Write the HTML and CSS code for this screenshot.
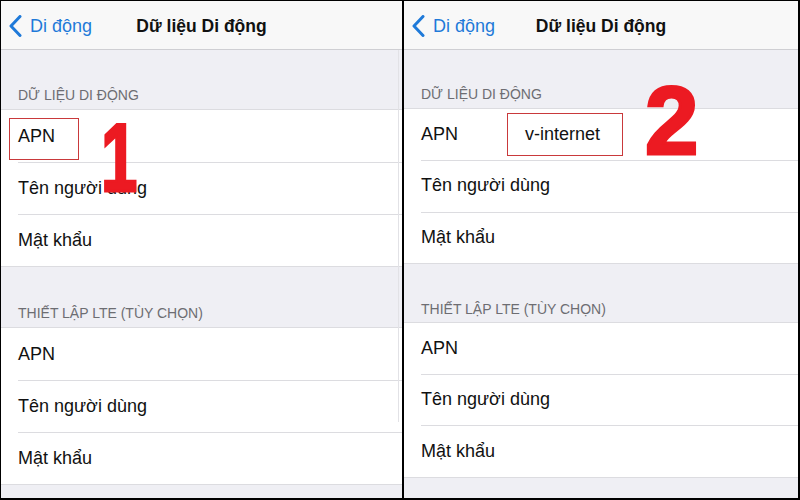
FILE: index.html
```html
<!DOCTYPE html>
<html lang="vi">
<head>
<meta charset="utf-8">
<title>Dữ liệu Di động</title>
<link rel="stylesheet" href="styles.css">
</head>
<body>
<div class="frame">
  <section class="panel panel-a">
    <header class="nav">
      <a class="back">
        <svg class="chev" width="14" height="22" viewBox="0 0 14 22"><polyline points="11,1.5 2,11 11,20.5" fill="none" stroke="#1f7ad9" stroke-width="3" stroke-linecap="round" stroke-linejoin="round"/></svg>
        <span>Di động</span>
      </a>
      <h1 class="title">Dữ liệu Di động</h1>
    </header>
    <div class="sec-head h59">DỮ LIỆU DI ĐỘNG</div>
    <ul class="group">
      <li class="row">APN</li>
      <li class="row">Tên người dùng</li>
      <li class="row">Mật khẩu</li>
    </ul>
    <div class="sec-head h60">THIẾT LẬP LTE (TÙY CHỌN)</div>
    <ul class="group">
      <li class="row">APN</li>
      <li class="row">Tên người dùng</li>
      <li class="row">Mật khẩu</li>
    </ul>
    <div class="mark mark-a"></div>
    <div class="num num-1">1</div>
    <div class="scroll"></div>
  </section>
  <section class="panel panel-b">
    <header class="nav">
      <a class="back">
        <svg class="chev" width="14" height="22" viewBox="0 0 14 22"><polyline points="11,1.5 2,11 11,20.5" fill="none" stroke="#1f7ad9" stroke-width="3" stroke-linecap="round" stroke-linejoin="round"/></svg>
        <span>Di động</span>
      </a>
      <h1 class="title">Dữ liệu Di động</h1>
    </header>
    <div class="sec-head h58">DỮ LIỆU DI ĐỘNG</div>
    <ul class="group">
      <li class="row">APN<span class="value">v-internet</span></li>
      <li class="row">Tên người dùng</li>
      <li class="row">Mật khẩu</li>
    </ul>
    <div class="sec-head h58 pb5">THIẾT LẬP LTE (TÙY CHỌN)</div>
    <ul class="group">
      <li class="row">APN</li>
      <li class="row">Tên người dùng</li>
      <li class="row">Mật khẩu</li>
    </ul>
    <div class="mark mark-b"></div>
    <div class="num num-2">2</div>
  </section>
</div>
</body>
</html>
```

FILE: styles.css
```css
* { box-sizing: border-box; }
html, body {
  margin: 0;
  padding: 0;
  width: 800px;
  height: 500px;
  overflow: hidden;
  background: #000;
  font-family: "Liberation Sans", Arial, sans-serif;
}
.frame {
  display: flex;
  gap: 2px;
  padding: 1px 2px 2px 1px;
  height: 500px;
}
.panel {
  position: relative;
  background: #efeff4;
  overflow: hidden;
  --row: 52px;
}
.panel-a { width: 401px; flex: none; }
.panel-b { flex: 1; --row: 51.3px; }

.nav {
  position: relative;
  height: 49px;
  padding-top: 2px;
  background: #f8f8f8;
  border-bottom: 1px solid #cfcfd3;
  display: flex;
  align-items: center;
  justify-content: center;
}
.back {
  position: absolute;
  left: 8px;
  top: 2px;
  bottom: 0;
  display: flex;
  align-items: center;
  gap: 7px;
  color: #1f7ad9;
  font-size: 18px;
}
.chev { display: block; margin-top: -1px; }
.title {
  margin: 0;
  font-size: 17.5px;
  font-weight: 700;
  color: #111;
}

.sec-head {
  display: flex;
  align-items: flex-end;
  padding: 0 0 6px 17px;
  font-size: 14px;
  line-height: 16px;
  color: #6d6d72;
}
.pb5 { padding-bottom: 5px; }
.h58 { height: 58px; }
.h59 { height: 59px; }
.h60 { height: 60px; }

.group {
  list-style: none;
  margin: 0;
  padding: 0;
  background: #fff;
  border-top: 1px solid #dcdce0;
  border-bottom: 1px solid #dcdce0;
}
.row {
  position: relative;
  height: var(--row);
  display: flex;
  align-items: center;
  padding-left: 17px;
  font-size: 18px;
  color: #111;
}
.row + .row::before {
  content: "";
  position: absolute;
  left: 17px;
  right: 0;
  top: 0;
  border-top: 1px solid #dcdce0;
}
.value {
  margin-left: 67px;
}

.mark {
  position: absolute;
  border: 1px solid #c9393b;
}
.mark-a { left: 8px; top: 117px; width: 70px; height: 42px; }
.mark-b { left: 103px; top: 112px; width: 116px; height: 43px; }

.num {
  position: absolute;
  font-family: "Liberation Sans", Arial, sans-serif;
  font-weight: 700;
  font-size: 96px;
  line-height: 96px;
  color: #ec1a22;
  -webkit-text-stroke: 3px #ec1a22;
}
.num-1 {
  left: 100px;
  top: 109px;
  transform: scaleX(0.68);
  transform-origin: 0 0;
}
.num-2 { left: 241px; top: 72px; }

.scroll {
  position: absolute;
  right: 3px;
  top: 49px;
  height: 372px;
  width: 1px;
  background: #e2e2e6;
}
```
